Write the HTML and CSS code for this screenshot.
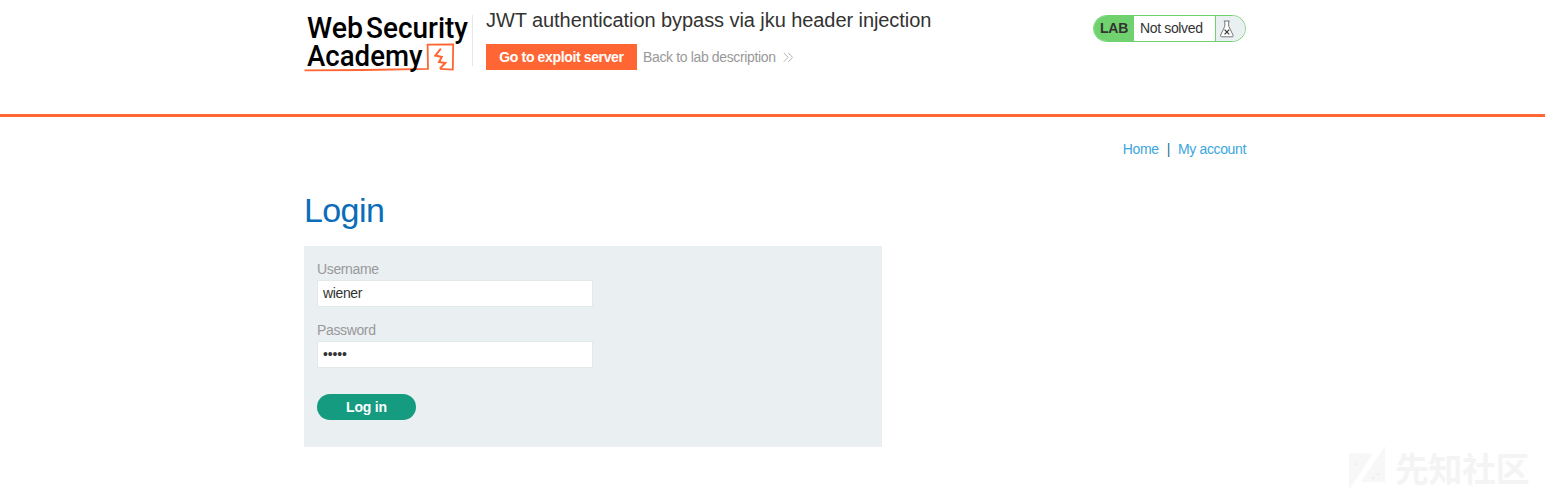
FILE: index.html
```html
<!DOCTYPE html>
<html lang="en">
<head>
<meta charset="utf-8">
<title>JWT authentication bypass via jku header injection</title>
<link rel="stylesheet" href="styles.css">
</head>
<body>
<header class="lab-header">
  <div class="container header-row">
    <svg class="logo" width="169" height="70" viewBox="0 0 169 70" role="img" aria-label="Web Security Academy">
      <path class="logo-rule" d="M168.5 9 V60"/>
      <text class="logo-text" x="3" y="32.2" textLength="56" lengthAdjust="spacingAndGlyphs">Web</text>
      <text class="logo-text" x="62" y="32.2" textLength="102" lengthAdjust="spacingAndGlyphs">Security</text>
      <path class="logo-line" d="M0.5 64.3 L60 64 L124 62.8 L123.6 38.6 L149.2 38.4 L148.8 63.6 L136 62.8"/>
      <text class="logo-text" x="3" y="59.5" textLength="115.5" lengthAdjust="spacingAndGlyphs">Academy</text>
      <path class="logo-bolt" d="M136.8 42.6 L131.3 49.6 L137.8 51 L135 56 L141.3 57 L135.8 62.8"/>
    </svg>
    <div class="title-block">
      <h2 class="title">JWT authentication bypass via jku header injection</h2>
      <div class="actions">
        <a class="exploit">Go to exploit server</a>
        <a class="back">Back to lab description
          <svg class="chevrons" width="11" height="11" viewBox="0 0 11 11"><path d="M0.8 0.8 L5 5.3 L0.8 9.8 M5.3 0.8 L9.5 5.3 L5.3 9.8"/></svg>
        </a>
      </div>
    </div>
    <div class="status">
      <span class="status-lab">LAB</span>
      <span class="status-text">Not solved</span>
      <span class="status-icon">
        <svg width="14" height="18" viewBox="0 0 14 18"><path class="flask" d="M3.8 1 H9.7 M4.8 1 V6.2 L0.6 15.2 Q0.2 16.8 1.6 16.8 H12.2 Q13.6 16.8 13.1 15.2 L8.7 6.2 V1"/><path class="cross" d="M4.6 9.6 L9.2 14.4 M9.2 9.6 L4.6 14.4"/></svg>
      </span>
    </div>
  </div>
</header>
<main class="container">
  <nav class="nav"><a>Home</a><span>|</span><a>My account</a></nav>
  <h1 class="heading">Login</h1>
  <form class="login">
    <label class="label" for="username">Username</label>
    <input class="field" id="username" type="text" value="wiener">
    <label class="label" for="password">Password</label>
    <input class="field secret" id="password" type="password" value="peter">
    <button class="submit" type="button">Log in</button>
  </form>
</main>
<div class="watermark">
  <svg width="37" height="44" viewBox="0 0 37 44"><path class="mark" d="M0 7.5 H24 L0 44 Z M36 0 V36 H12 Z"/><circle class="dot" cx="7" cy="18" r=".6"/><circle class="dot" cx="29" cy="28" r=".6"/><circle class="dot" cx="24" cy="32" r=".6"/></svg>
  <span>先知社区</span>
</div>
</body>
</html>
```
FILE: styles.css
```css
* { box-sizing: border-box; }
body {
  margin: 0;
  height: 493px;
  overflow: hidden;
  position: relative;
  background: #fff;
  color: #333332;
  font-family: "Liberation Sans", Arial, sans-serif;
  font-size: 14px;
  letter-spacing: -0.36px;
}
.container { width: 942px; margin-left: 304px; }
.lab-header { height: 117px; border-bottom: 3px solid #ff6633; }
.header-row { display: flex; align-items: flex-start; }
.logo { margin-top: 6px; flex: none; overflow: visible; letter-spacing: 0; }
.logo-rule { stroke: #e6e6e6; }
.logo-text { font-family: Roboto, sans-serif; font-weight: 500; font-size: 30px; fill: #000; }
.logo-line { fill: none; stroke: #ff6633; stroke-width: 1.8; }
.logo-bolt { fill: none; stroke: #ff6633; stroke-width: 2; }
.title-block { margin-left: 13px; padding-top: 8px; }
.title { margin: 0; font-size: 20px; font-weight: 400; line-height: 24px; letter-spacing: -0.07px; white-space: nowrap; }
.actions { display: flex; align-items: center; margin-top: 12px; height: 26px; white-space: nowrap; }
.exploit { width: 151px; height: 26px; line-height: 26px; text-align: center; background: #ff6633; color: #fff; font-weight: 700; }
.back { margin-left: 6px; color: #999; }
.chevrons { margin-left: 4px; vertical-align: -1px; fill: none; stroke: #b5b5b5; stroke-width: 1; }
.status { display: flex; margin: 15px 0 0 auto; width: 153px; height: 27px; border: 1px solid #6fd26f; border-radius: 14px; overflow: hidden; line-height: 25px; white-space: nowrap; }
.status-lab { width: 40px; padding-left: 6px; background: #6fd26f; font-weight: 700; letter-spacing: -0.2px; }
.status-text { width: 82px; padding-left: 6px; border-right: 1px solid #6fd26f; letter-spacing: -0.35px; }
.status-icon { flex: 1; display: flex; align-items: center; padding-left: 4px; background: #eaeff2; }
.flask { fill: #fff; stroke: #777; stroke-width: 1; }
.cross { fill: none; stroke: #333; stroke-width: 1.2; }
.nav { display: flex; justify-content: flex-end; gap: 8px; padding-top: 24px; line-height: 17px; color: #3ba6dc; }
.nav span { color: #29708f; }
.heading { margin: 30px 0 0; height: 58px; line-height: 44px; font-size: 34px; font-weight: 400; letter-spacing: -0.6px; color: #0b6db7; }
.login { display: flex; flex-direction: column; align-items: flex-start; width: 578px; height: 201px; padding: 15px 13px 0; background: #eaeff2; }
.label { height: 19px; line-height: 17px; color: #999; }
.field { width: 276px; height: 27px; margin-bottom: 15px; padding: 0 5px 1px; border: 1px solid #e3e8ea; background: #fff; color: #333332; font: inherit; letter-spacing: inherit; }
.secret { letter-spacing: -0.15px; }
.submit { width: 99px; height: 26px; margin-top: 11px; padding: 0 0 1px; border: 0; border-radius: 14px; background: #159b80; color: #fff; font: inherit; font-weight: 700; letter-spacing: -0.2px; }
.watermark { position: absolute; left: 1349px; top: 446px; display: flex; gap: 9px; color: #f4f4f4; font: 700 34px/44px "Noto Sans CJK SC", sans-serif; letter-spacing: -0.5px; white-space: nowrap; }
.mark { fill: #f7f7f7; }
.dot { fill: #ccc; }
```
